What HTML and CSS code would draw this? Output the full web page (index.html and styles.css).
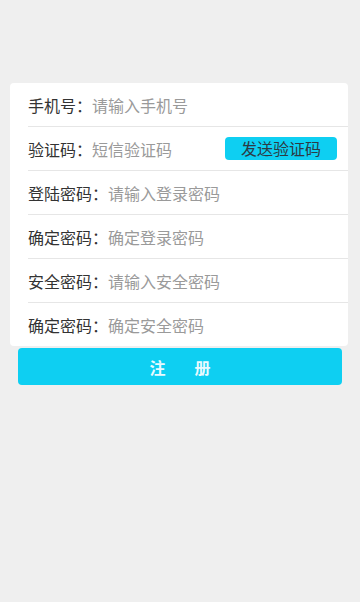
FILE: index.html
```html
<!DOCTYPE html>
<html lang="zh">
<head>
<meta charset="utf-8">
<meta name="viewport" content="width=device-width, initial-scale=1">
<link rel="stylesheet" href="styles.css">
</head>
<body>
<main class="page">
  <form class="card">
    <div class="row"><span class="label">手机号：</span><span class="ph">请输入手机号</span></div>
    <div class="row"><span class="label">验证码：</span><span class="ph">短信验证码</span><button type="button" class="send">发送验证码</button></div>
    <div class="row"><span class="label">登陆密码：</span><span class="ph">请输入登录密码</span></div>
    <div class="row"><span class="label">确定密码：</span><span class="ph">确定登录密码</span></div>
    <div class="row"><span class="label">安全密码：</span><span class="ph">请输入安全密码</span></div>
    <div class="row last"><span class="label">确定密码：</span><span class="ph">确定安全密码</span></div>
  </form>
  <button type="button" class="submit"><span>注</span><span>册</span></button>
</main>
</body>
</html>
```

FILE: styles.css
```css
html, body {
  margin: 0;
  padding: 0;
  background: #efefef;
  height: 100%;
}
body {
  font-family: "Noto Sans CJK SC", "Noto Sans", sans-serif;
  color: #333;
}
.page {
  padding-top: 83px;
  display: flex;
  flex-direction: column;
}
.card {
  margin: 0 12px 0 10px;
  background: #fff;
  border-radius: 4px;
  padding-left: 18px;
}
.row {
  height: 44px;
  display: flex;
  align-items: center;
  border-bottom: 1px solid #e6e6e6;
  box-sizing: border-box;
  font-size: 16px;
  line-height: 1;
}
.row.last {
  border-bottom: none;
  height: 43px;
}
.label {
  color: #333;
}
.ph {
  color: #9a9a9a;
  flex: 1;
}
.send {
  width: 112px;
  height: 23px;
  margin-right: 11px;
  border: none;
  border-radius: 4px;
  background: #0ecff2;
  color: #2d3a44;
  font-family: inherit;
  font-size: 16px;
  line-height: 23px;
  padding: 0;
}
.submit {
  margin: 2px 18px 0 18px;
  height: 37px;
  border: none;
  border-radius: 4px;
  background: #0ecff2;
  color: #eafaff;
  font-family: inherit;
  font-size: 16px;
  font-weight: bold;
  display: flex;
  justify-content: center;
  align-items: center;
  gap: 29px;
  padding: 0;
}
```
